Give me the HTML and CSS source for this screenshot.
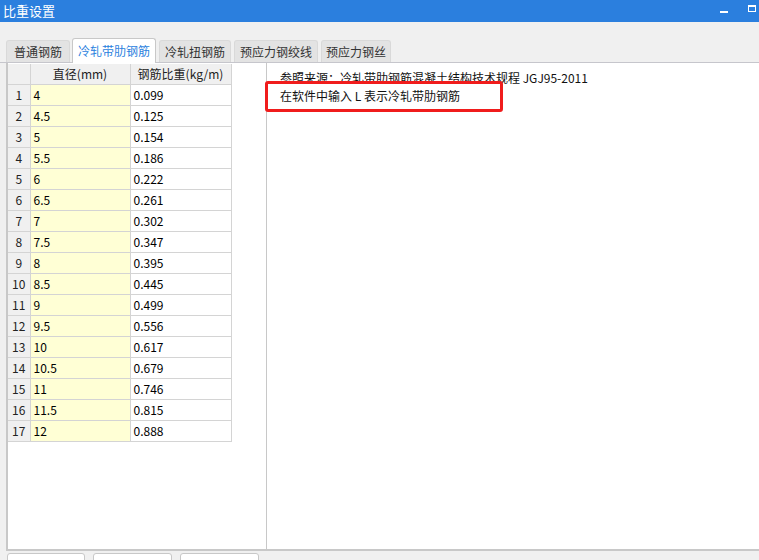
FILE: index.html
```html
<!DOCTYPE html>
<html>
<head>
<meta charset="utf-8">
<link rel="stylesheet" href="styles.css">
</head>
<body>
<div class="window">
  <div class="titlebar">
    <span class="title">比重设置</span>
    <span class="ctrl min"></span>
    <span class="ctrl max"></span>
  </div>
  <div class="tabs">
    <div class="tab t1">普通钢筋</div>
    <div class="tab active t2">冷轧带肋钢筋</div>
    <div class="tab t3">冷轧扭钢筋</div>
    <div class="tab t4">预应力钢绞线</div>
    <div class="tab t5">预应力钢丝</div>
  </div>
  <div class="pane">
    <div class="left">
      <table class="grid">
        <thead>
          <tr><th class="num"></th><th class="d">直径(mm)</th><th class="w">钢筋比重(kg/m)</th></tr>
        </thead>
        <tbody>
          <tr><td class="num">1</td><td class="d">4</td><td class="w">0.099</td></tr>
          <tr><td class="num">2</td><td class="d">4.5</td><td class="w">0.125</td></tr>
          <tr><td class="num">3</td><td class="d">5</td><td class="w">0.154</td></tr>
          <tr><td class="num">4</td><td class="d">5.5</td><td class="w">0.186</td></tr>
          <tr><td class="num">5</td><td class="d">6</td><td class="w">0.222</td></tr>
          <tr><td class="num">6</td><td class="d">6.5</td><td class="w">0.261</td></tr>
          <tr><td class="num">7</td><td class="d">7</td><td class="w">0.302</td></tr>
          <tr><td class="num">8</td><td class="d">7.5</td><td class="w">0.347</td></tr>
          <tr><td class="num">9</td><td class="d">8</td><td class="w">0.395</td></tr>
          <tr><td class="num">10</td><td class="d">8.5</td><td class="w">0.445</td></tr>
          <tr><td class="num">11</td><td class="d">9</td><td class="w">0.499</td></tr>
          <tr><td class="num">12</td><td class="d">9.5</td><td class="w">0.556</td></tr>
          <tr><td class="num">13</td><td class="d">10</td><td class="w">0.617</td></tr>
          <tr><td class="num">14</td><td class="d">10.5</td><td class="w">0.679</td></tr>
          <tr><td class="num">15</td><td class="d">11</td><td class="w">0.746</td></tr>
          <tr><td class="num">16</td><td class="d">11.5</td><td class="w">0.815</td></tr>
          <tr><td class="num">17</td><td class="d">12</td><td class="w">0.888</td></tr>
        </tbody>
      </table>
    </div>
    <div class="right">
      <p class="line">参照来源：冷轧带肋钢筋混凝土结构技术规程 JGJ95-2011</p>
      <p class="line">在软件中输入 L 表示冷轧带肋钢筋</p>
      <div class="redbox"></div>
    </div>
  </div>
  <div class="buttons">
    <div class="btn b1"></div>
    <div class="btn b2"></div>
    <div class="btn b3"></div>
  </div>
</div>
</body>
</html>
```
FILE: styles.css
```css
html, body {
  margin: 0;
  padding: 0;
  width: 759px;
  height: 560px;
  overflow: hidden;
  background: #f0f0f0;
  font-family: "Noto Sans CJK SC", "Noto Sans", sans-serif;
  font-size: 12px;
  color: #000;
}
.window {
  display: flex;
  flex-direction: column;
  height: 560px;
}
.window > * { flex-shrink: 0; }
.titlebar {
  height: 22px;
  background: #2b7fde;
  color: #fff;
  display: flex;
  align-items: center;
  position: relative;
}
.title {
  margin-left: 3px;
  font-size: 13px;
  line-height: 22px;
}
.ctrl {
  position: absolute;
  box-sizing: border-box;
}
.ctrl.min {
  left: 720px;
  top: 11px;
  width: 8px;
  height: 2px;
  background: #fff;
}
.ctrl.max {
  left: 748px;
  top: 5px;
  width: 8px;
  height: 7px;
  border: 1px solid #fff;
  border-top-width: 2px;
}
.tabs {
  display: flex;
  align-items: flex-end;
  height: 40px;
  padding-left: 6px;
  box-sizing: border-box;
}
.tab {
  height: 22px;
  line-height: 22px;
  box-sizing: border-box;
  background: #e3e3e3;
  border: 1px solid #d9d9d9;
  border-bottom: none;
  border-radius: 3px 3px 0 0;
  text-align: center;
  color: #333;
  font-size: 12px;
  margin-right: 3px;
}
.tab.t1 { width: 64px; }
.tab.t2 { width: 84px; margin-left: -1px; }
.tab.t3 { width: 72px; }
.tab.t4 { width: 84px; }
.tab.t5 { width: 70px; }
.tab.active {
  height: 25px;
  line-height: 24px;
  background: #fff;
  color: #2b7fde;
  border-color: #c8c8c8;
  margin-bottom: -1px;
  position: relative;
  z-index: 1;
}
.pane {
  display: flex;
  height: 489px;
  border-top: 1px solid #c6c6cc;
  box-sizing: border-box;
}
.left {
  width: 261px;
  margin-left: 6px;
  background: #fff;
  border-left: 2px solid #c8c8c8;
  border-right: 1px solid #c8c8c8;
  border-bottom: 2px solid #c8c8c8;
  box-sizing: border-box;
  padding-top: 1px;
}
.grid {
  border-collapse: collapse;
  table-layout: fixed;
  width: 223px;
}
.grid th, .grid td {
  border: 1px solid #d4d4d4;
  height: 21px;
  padding: 0 3px;
  font-weight: normal;
  white-space: nowrap;
  overflow: hidden;
  line-height: 20px;
  box-sizing: border-box;
}
.grid th { height: 20px; line-height: 19px; }
.grid tr:first-child th { border-top: none; }
.grid th:first-child, .grid td:first-child { border-left: none; }
.grid th {
  background: #f0f0f0;
  text-align: center;
  color: #222;
}
.grid td.num {
  background: #f0f0f0;
  text-align: center;
  color: #222;
  padding: 0;
}
.grid .num { width: 22px; }
.grid .d { width: 100px; }
.grid .w { width: 101px; }
.grid td.d { background: #ffffd5; }
.right {
  flex: 1;
  background: #fff;
  position: relative;
  border-bottom: 2px solid #c8c8c8;
  padding: 6px 0 0 13px;
  box-sizing: border-box;
}
.line {
  margin: 0;
  line-height: 18px;
  color: #111;
}
.redbox {
  position: absolute;
  left: -2px;
  top: 18px;
  width: 238px;
  height: 31px;
  box-sizing: border-box;
  border: 3px solid #f01c1c;
  border-radius: 3px;
}
.buttons {
  display: flex;
  padding: 2px 0 0 7px;
  gap: 8px;
}
.btn {
  height: 20px;
  background: #fff;
  border: 1px solid #c8c8c8;
  border-radius: 3px;
  box-sizing: border-box;
}
.b1 { width: 78px; }
.b2 { width: 79px; }
.b3 { width: 79px; }
```
